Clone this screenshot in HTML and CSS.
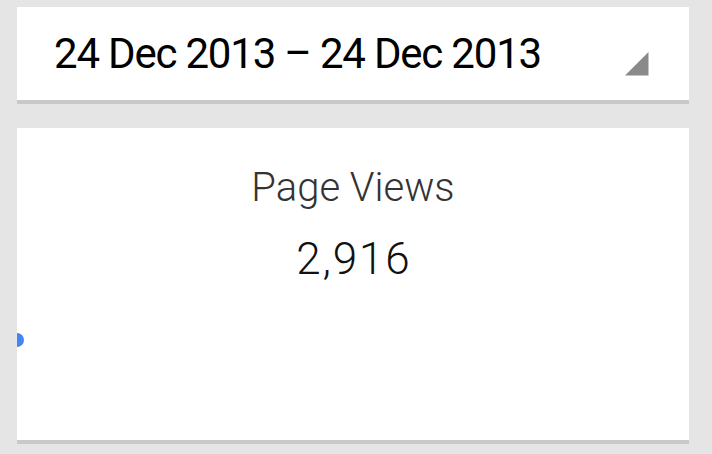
FILE: index.html
```html
<!DOCTYPE html>
<html>
<head>
<meta charset="utf-8">
<link rel="stylesheet" href="styles.css">
</head>
<body>
<div class="page">
  <div class="card range">
    <span class="range-text">24 Dec 2013 – 24 Dec 2013</span>
    <svg class="caret" width="24" height="24" viewBox="0 0 24 24"><polygon points="0,23.5 23.5,23.5 23.5,0" fill="#8a8a8a"/></svg>
  </div>
  <div class="card metric">
    <div class="metric-label">Page Views</div>
    <div class="metric-value">2,916</div>
    <span class="point"></span>
  </div>
</div>
</body>
</html>
```
FILE: styles.css
```css
html, body {
  margin: 0;
  padding: 0;
  background: #e5e5e5;
}
.page {
  padding: 7px 23px 0 17px;
  display: flex;
  flex-direction: column;
  gap: 24px;
  font-family: Roboto, "Noto Sans", sans-serif;
}
.card {
  background: #fff;
  border-bottom: 4px solid #c9c9c9;
}
.range {
  height: 93px;
  display: flex;
  align-items: center;
  padding: 0 40px 0 37px;
  position: relative;
}
.range-text {
  font-size: 42px;
  color: #000;
  flex: 1;
  margin-top: -1px;
  letter-spacing: -1.2px;
}
.caret {
  display: block;
  margin-top: 21px;
}
.metric {
  height: 312px;
  display: flex;
  flex-direction: column;
  align-items: center;
  position: relative;
  overflow: hidden;
}
.metric-label {
  margin-top: 37px;
  font-size: 40px;
  font-weight: 300;
  color: #333;
  line-height: 46px;
}
.metric-value {
  margin-top: 23px;
  font-size: 44px;
  font-weight: 300;
  color: #111;
  line-height: 50px;
  letter-spacing: 1.8px;
  margin-right: -1.8px;
}
.point {
  position: absolute;
  left: -7px;
  top: 205px;
  width: 14px;
  height: 14px;
  border-radius: 50%;
  background: #4285f4;
}
```
